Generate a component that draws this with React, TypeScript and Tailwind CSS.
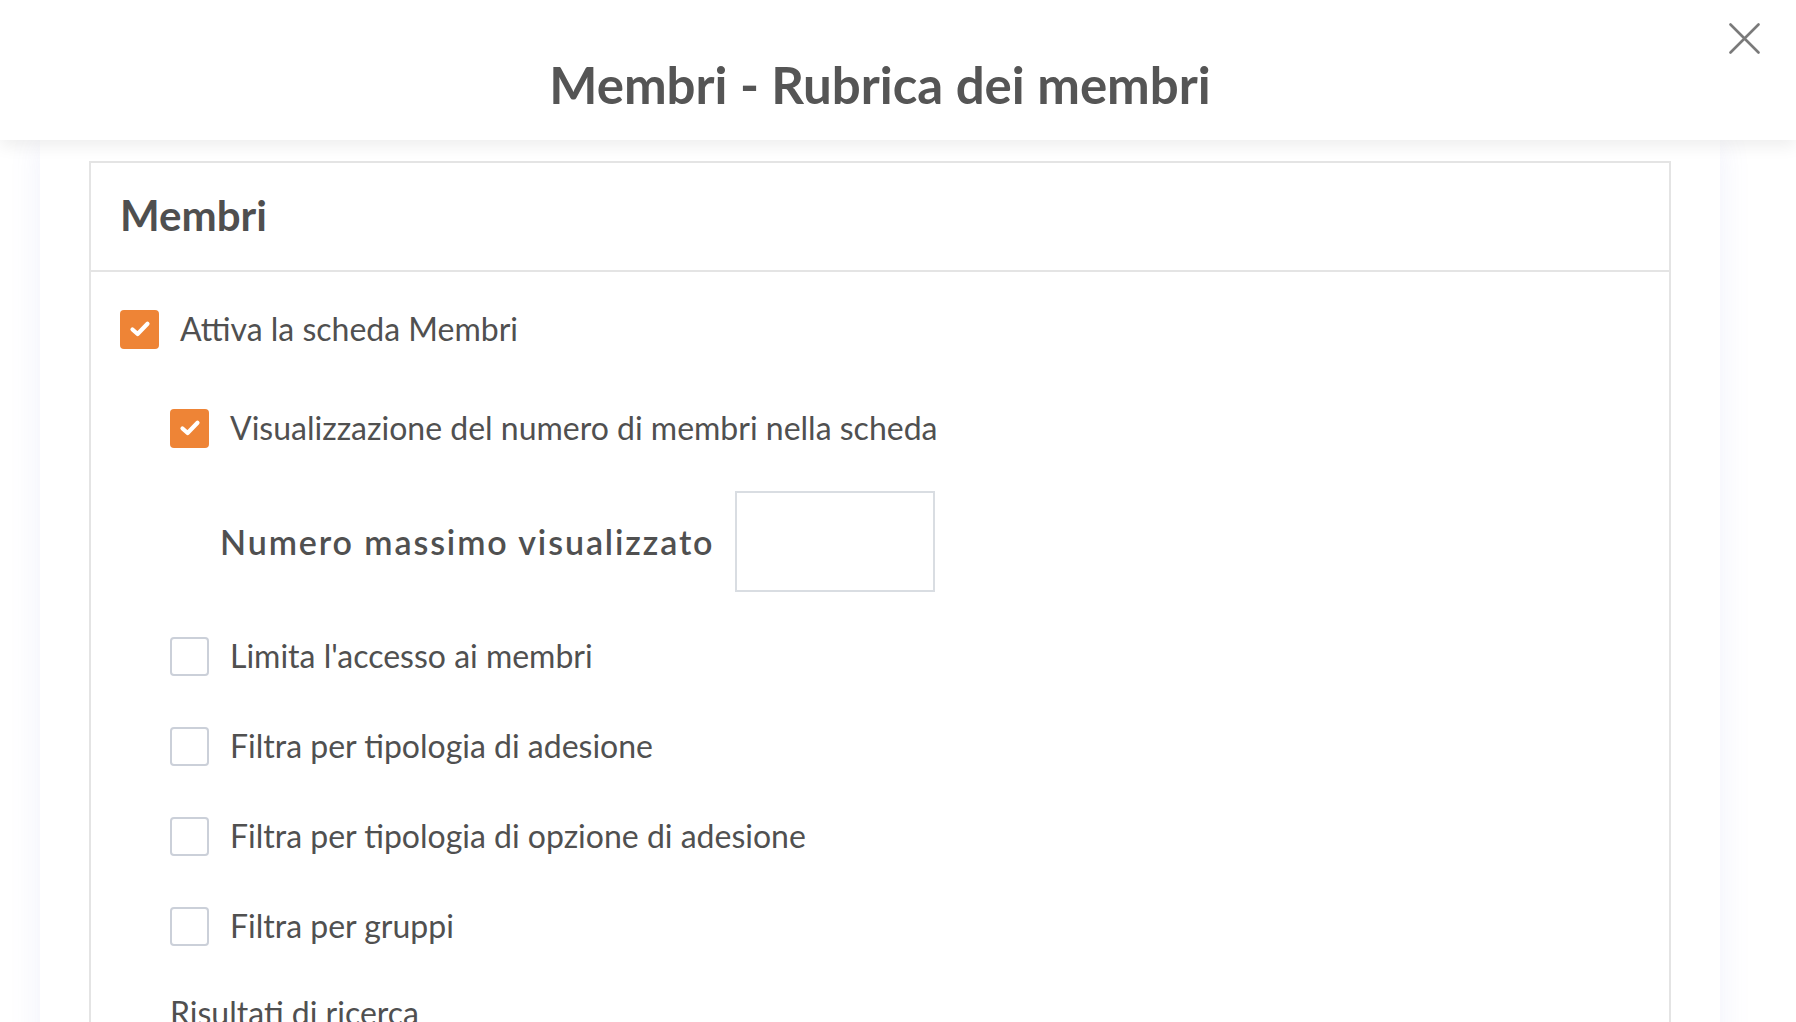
import { useState } from "react";

const FONT = "font-['Lato','Noto_Sans',sans-serif]";

function CheckMark() {
  return (
    <svg width="22" height="18" viewBox="0 0 22 18" fill="none">
      <path d="M3.5 9.5 L8.6 14 L18.5 3.8" stroke="#fff" strokeWidth="4.2" strokeLinecap="round" strokeLinejoin="round" />
    </svg>
  );
}

function Box({ checked, onClick }: { checked: boolean; onClick: () => void }) {
  return checked ? (
    <button
      onClick={onClick}
      className="w-[39px] h-[39px] shrink-0 rounded-[4px] bg-[#ee8436] flex items-center justify-center"
    >
      <CheckMark />
    </button>
  ) : (
    <button
      onClick={onClick}
      className="w-[39px] h-[39px] shrink-0 rounded-[4px] border-2 border-[#cbd0d9] bg-white"
    />
  );
}

function Row({
  label,
  checked,
  onToggle,
  indent,
  className = "",
}: {
  label: string;
  checked: boolean;
  onToggle: () => void;
  indent?: boolean;
  className?: string;
}) {
  return (
    <div className={`h-[90px] flex items-center gap-[21px] ${indent ? "pl-[50px]" : ""} ${className}`}>
      <Box checked={checked} onClick={onToggle} />
      <span className="text-[32px] text-[#505050] leading-none">{label}</span>
    </div>
  );
}

export default function App() {
  const [opts, setOpts] = useState({
    attiva: true,
    numero: true,
    limita: false,
    tipologia: false,
    opzione: false,
    gruppi: false,
  });
  const toggle = (k: keyof typeof opts) => () => setOpts((o) => ({ ...o, [k]: !o[k] }));

  return (
    <div className={`h-[1022px] overflow-hidden bg-white flex flex-col ${FONT}`}>
      {/* Modal header */}
      <header className="relative z-10 h-[140px] shrink-0 bg-white shadow-[0_6px_16px_rgba(0,0,0,0.07)] flex items-center justify-center pr-[36px]">
        <h1 className="text-[51px] font-bold text-[#555555] leading-none pt-[28px]">Membri - Rubrica dei membri</h1>
        <button className="absolute right-[36px] top-[23px] w-[31px] h-[31px]">
          <svg width="31" height="31" viewBox="0 0 31 31">
            <path d="M1.5 1.5 L29.5 29.5 M29.5 1.5 L1.5 29.5" stroke="#7a7a7a" strokeWidth="2.6" strokeLinecap="round" />
          </svg>
        </button>
      </header>

      {/* Page body */}
      <div className="flex-1 pl-[40px] pr-[76px] flex">
        <div className="flex-1 bg-white shadow-[0_0_30px_rgba(110,120,220,0.10)] px-[49px] pt-[21px]">
          <section className="border-2 border-[#e4e4e4] h-[900px]">
            <div className="h-[109px] border-b-2 border-[#e4e4e4] flex items-center pl-[29px]">
              <h2 className="text-[42px] font-bold text-[#4f4f4f] leading-none pb-[4px]">Membri</h2>
            </div>

            <div className="pl-[29px] pt-[12px]">
              <Row label="Attiva la scheda Membri" checked={opts.attiva} onToggle={toggle("attiva")} />
              <Row
                label="Visualizzazione del numero di membri nella scheda"
                checked={opts.numero}
                onToggle={toggle("numero")}
                indent
                className="mt-[9px]"
              />
              <div className="mt-[18px] pl-[100px] flex items-center gap-[21px]">
                <label className="text-[34px] font-semibold tracking-[1.9px] text-[#505050] leading-none">
                  Numero massimo visualizzato
                </label>
                <input className="w-[200px] h-[101px] border-2 border-[#d9dde2] bg-white outline-none px-3 text-[30px]" />
              </div>
              <Row label="Limita l'accesso ai membri" checked={opts.limita} onToggle={toggle("limita")} indent className="mt-[19px]" />
              <Row label="Filtra per tipologia di adesione" checked={opts.tipologia} onToggle={toggle("tipologia")} indent />
              <Row
                label="Filtra per tipologia di opzione di adesione"
                checked={opts.opzione}
                onToggle={toggle("opzione")}
                indent
              />
              <Row label="Filtra per gruppi" checked={opts.gruppi} onToggle={toggle("gruppi")} indent />
              <div className="h-[84px] flex items-center pl-[50px]">
                <span className="text-[32px] text-[#505050] leading-none">Risultati di ricerca</span>
              </div>
            </div>
          </section>
        </div>
      </div>
    </div>
  );
}
